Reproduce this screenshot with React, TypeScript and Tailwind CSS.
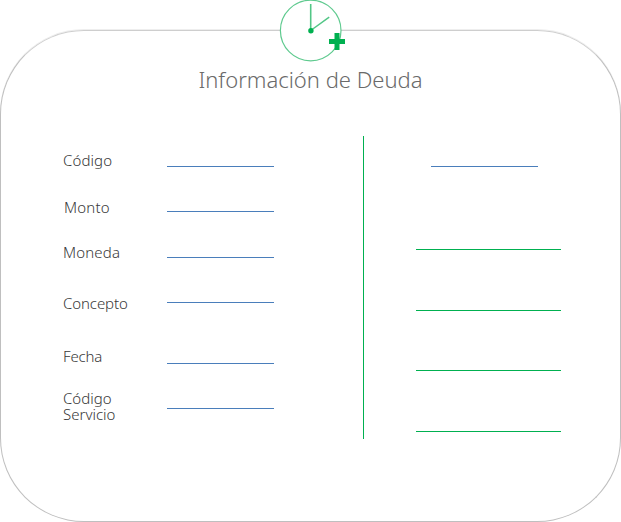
type Field = { label: string; row: string; text: string; line: string };

const fields: Field[] = [
  { label: 'Código', row: 'h-[45px]', text: 'mt-[12px] tracking-[0.1px]', line: 'mt-[26px]' },
  { label: 'Monto', row: 'h-[46px]', text: 'mt-[14px] pl-px tracking-[0.2px]', line: 'mt-[26px]' },
  { label: 'Moneda', row: 'h-[45px]', text: 'mt-[13px] tracking-[0.15px]', line: 'mt-[26px]' },
  { label: 'Concepto', row: 'h-[54px]', text: 'mt-[19px] tracking-[-0.1px]', line: 'mt-[26px]' },
  { label: 'Fecha', row: 'h-[54px]', text: 'mt-[18px] tracking-[-0.2px]', line: 'mt-[33px]' },
  { label: 'Código Servicio', row: 'h-[46px]', text: 'mt-[6px]', line: 'mt-[24px]' },
];

function ClockIcon() {
  return (
    <svg className="absolute left-[279px] top-0" width="68" height="62" viewBox="0 0 68 62" fill="none">
      <circle cx="31.7" cy="30.5" r="30.3" fill="white" stroke="#5fca8f" strokeWidth="1.2" />
      <path d="M31.7 30.5V4" stroke="#52c686" strokeWidth="1.6" />
      <path d="M31.7 30.5L50.2 17.2" stroke="#52c686" strokeWidth="1.5" />
      <circle cx="31.9" cy="30.8" r="2.7" fill="#00b050" />
      <path d="M55.5 33h5v6h5.5v5h-5.5v6h-5v-6H50v-5h5.5z" fill="#00b050" />
    </svg>
  );
}

export default function App() {
  return (
    <main className="relative h-[522px] w-[621px] overflow-hidden bg-white pt-[30px] font-['Noto_Sans','Open_Sans',sans-serif]">
      <section className="h-[492px] w-full rounded-[84px] border border-[#bfbfbf] border-t-[#cecece] shadow-[0_-1px_0_#eeeeee]">
        <h1 className="mt-[32px] text-center text-[22px] leading-8 font-light whitespace-nowrap text-[#6a6a6a]">
          Información de Deuda
        </h1>
        <div className="mt-[41px] flex">
          <div className="ml-[62px] w-[300px] pt-1">
            {fields.map((f) => (
              <div key={f.label} className={`flex items-start ${f.row}`}>
                <span className={`w-[104px] pr-8 text-[15px] leading-4 font-light text-[#383838] ${f.text}`}>{f.label}</span>
                <div className={`h-px w-[107px] bg-[#4a7ebb] ${f.line}`} />
              </div>
            ))}
          </div>
          <div className="h-[303px] w-px bg-[#00b050]" />
          <div className="ml-[52px] flex w-[145px] flex-col pt-[30px]">
            <div className="ml-[15px] h-px w-[107px] bg-[#4a7ebb]" />
            <div className="mt-[82px] h-px w-full bg-[#00b050]" />
            <div className="mt-[60px] h-px w-full bg-[#00b050]" />
            <div className="mt-[59px] h-px w-full bg-[#00b050]" />
            <div className="mt-[60px] h-px w-full bg-[#00b050]" />
          </div>
        </div>
      </section>
      <ClockIcon />
    </main>
  );
}
